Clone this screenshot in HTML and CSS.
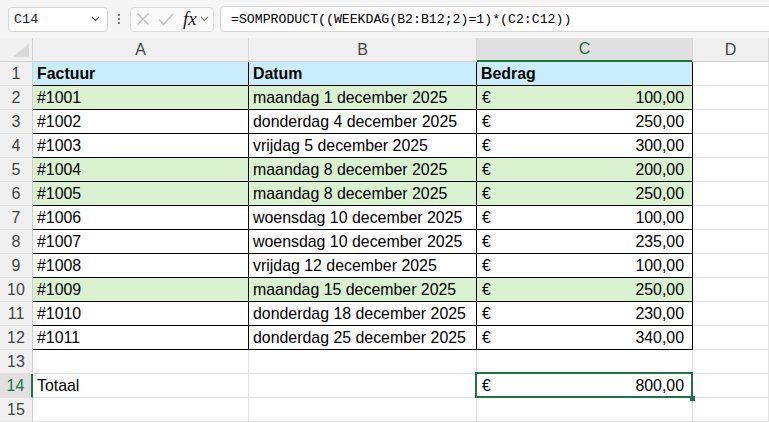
FILE: index.html
```html
<!DOCTYPE html>
<html lang="nl">
<head>
<meta charset="utf-8">
<title>Factuur</title>
<link rel="stylesheet" href="styles.css">
</head>
<body>
<div class="toolbar">
  <div class="namebox"><span class="nb-text">C14</span>
    <svg class="chev" width="9" height="6" viewBox="0 0 9 6"><path d="M1 1 L4.5 4.5 L8 1" fill="none" stroke="#444" stroke-width="1.2"/></svg>
  </div>
  <div class="dots"><i></i><i></i><i></i></div>
  <div class="fxbox">
    <svg class="ico" width="14" height="14" viewBox="0 0 14 14"><path d="M1.5 1.5 L12.5 12.5 M12.5 1.5 L1.5 12.5" stroke="#bdbdbd" stroke-width="1.2" fill="none"/></svg>
    <svg class="ico" width="16" height="13" viewBox="0 0 16 13"><path d="M1 6.5 L5.5 11.5 L15 1" stroke="#bdbdbd" stroke-width="1.2" fill="none"/></svg>
    <span class="fx">fx</span>
    <svg class="chev2" width="9" height="6" viewBox="0 0 9 6"><path d="M1 1 L4.5 4.5 L8 1" fill="none" stroke="#777" stroke-width="1.1"/></svg>
  </div>
  <div class="formula">=SOMPRODUCT((WEEKDAG(B2:B12;2)=1)*(C2:C12))</div>
</div>

<div class="sheet">
  <div class="corner"><div class="tri"></div></div>
  <div class="ch">A</div><div class="ch">B</div><div class="ch sel">C</div><div class="ch">D</div>

  <div class="rh">1</div>
  <div class="c t blue b">Factuur</div><div class="c t blue b">Datum</div><div class="c t blue b">Bedrag</div><div class="c"></div>

  <div class="rh">2</div>
  <div class="c t green">#1001</div><div class="c t green">maandag 1 december 2025</div><div class="c t green num"><span>€</span><span>100,00</span></div><div class="c"></div>

  <div class="rh">3</div>
  <div class="c t">#1002</div><div class="c t">donderdag 4 december 2025</div><div class="c t num"><span>€</span><span>250,00</span></div><div class="c"></div>

  <div class="rh">4</div>
  <div class="c t">#1003</div><div class="c t">vrijdag 5 december 2025</div><div class="c t num"><span>€</span><span>300,00</span></div><div class="c"></div>

  <div class="rh">5</div>
  <div class="c t green">#1004</div><div class="c t green">maandag 8 december 2025</div><div class="c t green num"><span>€</span><span>200,00</span></div><div class="c"></div>

  <div class="rh">6</div>
  <div class="c t green">#1005</div><div class="c t green">maandag 8 december 2025</div><div class="c t green num"><span>€</span><span>250,00</span></div><div class="c"></div>

  <div class="rh">7</div>
  <div class="c t">#1006</div><div class="c t">woensdag 10 december 2025</div><div class="c t num"><span>€</span><span>100,00</span></div><div class="c"></div>

  <div class="rh">8</div>
  <div class="c t">#1007</div><div class="c t">woensdag 10 december 2025</div><div class="c t num"><span>€</span><span>235,00</span></div><div class="c"></div>

  <div class="rh">9</div>
  <div class="c t">#1008</div><div class="c t">vrijdag 12 december 2025</div><div class="c t num"><span>€</span><span>100,00</span></div><div class="c"></div>

  <div class="rh">10</div>
  <div class="c t green">#1009</div><div class="c t green">maandag 15 december 2025</div><div class="c t green num"><span>€</span><span>250,00</span></div><div class="c"></div>

  <div class="rh">11</div>
  <div class="c t">#1010</div><div class="c t">donderdag 18 december 2025</div><div class="c t num"><span>€</span><span>230,00</span></div><div class="c"></div>

  <div class="rh">12</div>
  <div class="c t">#1011</div><div class="c t">donderdag 25 december 2025</div><div class="c t num"><span>€</span><span>340,00</span></div><div class="c"></div>

  <div class="rh">13</div>
  <div class="c"></div><div class="c"></div><div class="c"></div><div class="c"></div>

  <div class="rh sel">14</div>
  <div class="c">Totaal</div><div class="c"></div><div class="c num active"><span>€</span><span>800,00</span></div><div class="c"></div>

  <div class="rh">15</div>
  <div class="c"></div><div class="c"></div><div class="c"></div><div class="c"></div>
</div>
</body>
</html>
```

FILE: styles.css
```css
html, body {
  margin: 0;
  padding: 0;
}
body {
  width: 769px;
  height: 422px;
  overflow: hidden;
  background: #ffffff;
  font-family: "Liberation Sans", Arial, sans-serif;
  color: #000;
}

/* formula bar */
.toolbar {
  height: 38px;
  box-sizing: border-box;
  background: #f5f5f5;
  display: flex;
  align-items: center;
  padding-left: 8px;
}
.namebox {
  width: 100px;
  height: 25px;
  box-sizing: border-box;
  border: 1px solid #d5d5d5;
  border-radius: 4px;
  background: #fff;
  display: flex;
  align-items: center;
  justify-content: space-between;
  padding: 0 7px 0 5px;
}
.nb-text {
  font-family: "Liberation Mono", monospace;
  font-size: 13.5px;
  color: #222;
}
.dots {
  width: 22px;
  display: flex;
  flex-direction: column;
  align-items: center;
  gap: 2px;
}
.dots i {
  display: block;
  width: 2px;
  height: 2px;
  background: #555;
  border-radius: 1px;
}
.fxbox {
  width: 84px;
  height: 25px;
  box-sizing: border-box;
  border: 1px solid #dcdcdc;
  border-radius: 4px;
  background: #fafafa;
  display: flex;
  align-items: center;
  padding-left: 5px;
  gap: 8px;
}
.fx {
  font-family: "Liberation Serif", "DejaVu Serif", serif;
  font-style: italic;
  font-size: 19px;
  color: #222;
  margin-left: 1px;
  margin-right: -5px;
}
.formula {
  margin-left: 6px;
  height: 26px;
  flex: 1;
  margin-right: -20px;
  box-sizing: border-box;
  border: 1px solid #d5d5d5;
  border-radius: 4px;
  background: #fff;
  display: flex;
  align-items: center;
  padding-left: 10px;
  font-family: "Liberation Mono", monospace;
  font-size: 13.2px;
  color: #000;
}

/* sheet grid */
.sheet {
  display: grid;
  grid-template-columns: 33px 216px 228px 216px 1fr;
  grid-auto-rows: 24px;
}
.corner {
  background: #f0f0f0;
  border-right: 1px solid #d0d0d0;
  border-bottom: 1px solid #d0d0d0;
  display: flex;
  align-items: flex-end;
  justify-content: flex-end;
  padding: 0 3px 4px 0;
}
.tri {
  width: 16px;
  height: 14px;
  background: #d9d9d9;
  clip-path: polygon(100% 0, 100% 100%, 0 100%);
}
.ch {
  background: #f0f0f0;
  border-right: 1px solid #d6d6d6;
  border-bottom: 1px solid #d0d0d0;
  display: flex;
  align-items: center;
  justify-content: center;
  font-size: 16px;
  color: #444;
}
.ch.sel {
  background: #e0e0e0;
  color: #1e7145;
  border-bottom: 2px solid #217346;
}
.rh {
  background: #f0f0f0;
  border-right: 1px solid #d0d0d0;
  border-bottom: 1px solid #e2e2e2;
  display: flex;
  align-items: center;
  justify-content: center;
  font-size: 16px;
  color: #444;
}
.rh.sel {
  background: #e0e0e0;
  color: #1e7145;
  border-right: 2px solid #217346;
}
.c {
  box-sizing: border-box;
  border-right: 1px solid #e1e1e1;
  border-bottom: 1px solid #e1e1e1;
  display: flex;
  align-items: center;
  padding: 1px 4px 0 4px;
  font-size: 15.9px;
  white-space: nowrap;
}
.t {
  border-right-color: #000;
  border-bottom-color: #000;
}
.blue { background: #caedfb; }
.green { background: #daf2d0; }
.b { font-weight: bold; }
.num {
  justify-content: space-between;
  padding: 1px 8px 0 5px;
}
.active {
  position: relative;
}
.active::after {
  content: "";
  position: absolute;
  left: -2px;
  top: -2px;
  right: -1px;
  bottom: -1px;
  border: 2px solid #217346;
}
.active::before {
  content: "";
  position: absolute;
  right: -3px;
  bottom: -4px;
  width: 5px;
  height: 5px;
  background: #217346;
  z-index: 1;
}
```
